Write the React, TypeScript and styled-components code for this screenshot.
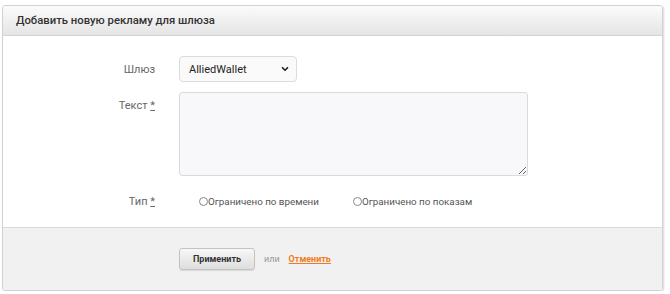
import styled, { createGlobalStyle } from 'styled-components';
import { ChevronDown } from 'lucide-react';

const GlobalStyle = createGlobalStyle`
    body {
        margin: 0;
        background: #ffffff;
        font-family: Roboto, "Liberation Sans", Arial, sans-serif;
    }
`

export default function App() {
    return (
        <>
            <GlobalStyle />
            <Panel>
                <Header>Добавить новую рекламу для шлюза</Header>
                <Body>
                    <FieldRow>
                        <Label>Шлюз</Label>
                        <SelectBox>
                            <Select defaultValue="AlliedWallet">
                                <option>AlliedWallet</option>
                            </Select>
                            <Chevron>
                                <ChevronDown size={10} strokeWidth={4} />
                            </Chevron>
                        </SelectBox>
                    </FieldRow>

                    <FieldRow $gap={10} $top>
                        <Label $top>Текст <Req>*</Req></Label>
                        <TextArea />
                    </FieldRow>

                    <FieldRow $gap={15}>
                        <Label>Тип <Req>*</Req></Label>
                        <RadioGroup>
                            <Radio><Dot />Ограничено по времени</Radio>
                            <Radio><Dot />Ограничено по показам</Radio>
                        </RadioGroup>
                    </FieldRow>
                </Body>
                <Footer>
                    <Button>Применить</Button>
                    <Or>или</Or>
                    <Cancel href="#">Отменить</Cancel>
                </Footer>
            </Panel>
        </>
    )
}

const Panel = styled.div`
    margin: 5px 0 0 2px;
    width: 659px;
    height: 284px;
    border: 1px solid #d2d2d2;
    border-radius: 3px;
    box-shadow: 1px 1px 2px rgba(0, 0, 0, 0.15);
    display: flex;
    flex-direction: column;
    overflow: hidden;
`

const Header = styled.div`
    height: 29px;
    display: flex;
    align-items: center;
    padding-left: 13px;
    background: linear-gradient(#fbfbfb, #e5e5e5);
    border-bottom: 1px solid #d4d4d4;
    font-size: 11.3px;
    font-weight: 500;
    color: #333;
`

const Body = styled.div`
    flex: 1;
    display: flex;
    flex-direction: column;
    padding-top: 20px;
    background: #fff;
`

const FieldRow = styled.div<{ $gap?: number; $top?: boolean }>`
    display: grid;
    grid-template-columns: 152px 1fr;
    column-gap: 24px;
    align-items: ${p => (p.$top ? 'start' : 'center')};
    margin-top: ${p => p.$gap || 0}px;
    min-height: 20px;
`

const Label = styled.div<{ $top?: boolean }>`
    text-align: right;
    font-size: 11px;
    color: #666;
    padding-top: ${p => (p.$top ? '7px' : '0')};
`

const Req = styled.span`
    text-decoration: underline;
`

const SelectBox = styled.div`
    position: relative;
    width: 118px;
`

const Select = styled.select`
    appearance: none;
    display: block;
    width: 118px;
    height: 26px;
    padding: 0 0 0 9px;
    border: 1px solid #dcdcdc;
    border-radius: 4px;
    background: #fafafa;
    font-family: Roboto, "Liberation Sans", Arial, sans-serif;
    font-size: 11px;
    color: #222;
`

const Chevron = styled.span`
    position: absolute;
    right: 7px;
    top: 8px;
    color: #222;
    pointer-events: none;
    display: flex;
`

const TextArea = styled.textarea`
    display: block;
    width: 349px;
    height: 84px;
    box-sizing: border-box;
    border: 1px solid #dadada;
    border-radius: 3px;
    background: #f8f8fa;
`

const RadioGroup = styled.div`
    display: flex;
    gap: 34px;
    padding-left: 20px;
    align-items: center;
`

const Radio = styled.label`
    display: flex;
    align-items: center;
    font-size: 9.8px;
    color: #555;
`

const Dot = styled.span`
    width: 7px;
    height: 7px;
    border: 1px solid #888;
    border-radius: 50%;
`

const Footer = styled.div`
    height: 62px;
    border-top: 1px solid #d9d9d9;
    background: #f1f1f1;
    display: flex;
    align-items: center;
    padding-left: 176px;
`

const Button = styled.button`
    width: 76px;
    height: 22px;
    border: 1px solid #c3c3c3;
    border-radius: 3px;
    background: linear-gradient(#f7f7f7, #dedede);
    box-shadow: 0 1px 1px rgba(0, 0, 0, 0.1);
    font-family: Roboto, "Liberation Sans", Arial, sans-serif;
    font-size: 9px;
    font-weight: bold;
    color: #333;
`

const Or = styled.span`
    margin-left: 9px;
    font-size: 9px;
    color: #999;
`

const Cancel = styled.a`
    margin-left: 9px;
    font-size: 9px;
    font-weight: bold;
    color: #ef7a1f;
    text-decoration: underline;
`
